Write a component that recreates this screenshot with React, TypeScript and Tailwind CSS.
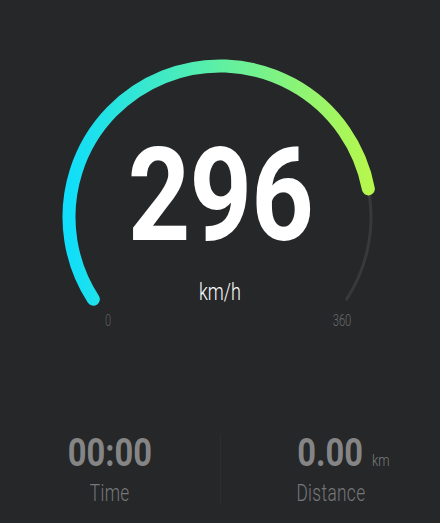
import React from 'react'

const CX = 220
const CY = 217
const R = 151
const START = 147
const SWEEP = 246

function point(deg: number) {
  const a = (deg * Math.PI) / 180
  return [CX + R * Math.cos(a), CY + R * Math.sin(a)]
}

function arc(from: number, to: number) {
  const [x1, y1] = point(from)
  const [x2, y2] = point(to)
  const large = to - from > 180 ? 1 : 0
  return `M ${x1} ${y1} A ${R} ${R} 0 ${large} 1 ${x2} ${y2}`
}

function Gauge({ value, max }: { value: number; max: number }) {
  const end = START + (SWEEP * value) / max
  return (
    <svg width="440" height="340" viewBox="0 0 440 340" className="block">
      <defs>
        <linearGradient id="speed" gradientUnits="userSpaceOnUse" x1="69" y1="0" x2="370" y2="0">
          <stop offset="0" stopColor="#10defa" />
          <stop offset="0.5" stopColor="#5ef0a4" />
          <stop offset="1" stopColor="#b6f74c" />
        </linearGradient>
      </defs>
      <path d={arc(START, START + SWEEP)} fill="none" stroke="#38393b" strokeWidth="3" strokeLinecap="round" />
      <path d={arc(START, end)} fill="none" stroke="url(#speed)" strokeWidth="13" strokeLinecap="round" />
    </svg>
  )
}

function Stat({ value, label, unit }: { value: string; label: string; unit?: string }) {
  return (
    <div className="flex flex-col items-center gap-2">
      <div className="relative">
        <span className="inline-block scale-x-[0.86] text-[38px] leading-[38px] font-bold text-[#858586]">{value}</span>
        {unit && (
          <span className="absolute left-full bottom-[4px] inline-block scale-x-[0.75] text-[17px] leading-none font-light text-[#7a7b7d]">
            {unit}
          </span>
        )}
      </div>
      <span className="inline-block scale-x-[0.72] text-[24px] leading-none font-light tracking-[0.5px] text-[#76777a]">
        {label}
      </span>
    </div>
  )
}

export default function App() {
  return (
    <div className="w-[440px] h-[523px] overflow-hidden bg-[#262729] font-['Roboto','Liberation_Sans',sans-serif]">
      <div className="relative h-[434px]">
        <Gauge value={296} max={360} />
        {/* readout laid over the dial */}
        <div className="absolute inset-0 flex flex-col items-center pt-[131px]">
          <span className="inline-block scale-x-[0.84] text-[130px] leading-none font-bold text-white tracking-[-1px]">296</span>
          <span className="mt-[19px] inline-block scale-x-[0.75] text-[24px] leading-none font-light text-white">km/h</span>
          <div className="mt-[9px] flex w-full justify-between pl-[98px] pr-[78px] text-[16px] leading-none font-light">
            <span className="w-[20px] text-center scale-x-[0.7] text-[#5c5d5f]">0</span>
            <span className="w-[40px] text-center scale-x-[0.7] text-[#6a6b6d]">360</span>
          </div>
        </div>
      </div>
      <div className="grid grid-cols-2">
        <Stat value="00:00" label="Time" />
        <div className="border-l border-[#2c2d2f]">
          <Stat value="0.00" label="Distance" unit="km" />
        </div>
      </div>
    </div>
  )
}
